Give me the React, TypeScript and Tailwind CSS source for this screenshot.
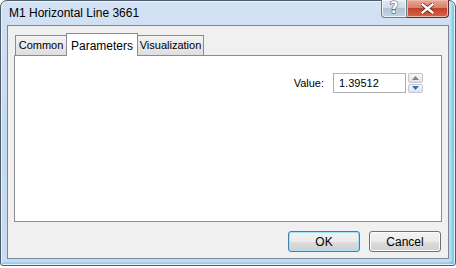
import React from "react";

const font = { fontFamily: '"Liberation Sans", Arial, sans-serif' };

function Tab({ label, selected, w }: { label: string; selected?: boolean; w: string }) {
  if (selected) {
    return (
      <div
        className={`${w} h-[23px] -mb-px relative z-10 bg-white border border-b-0 border-[#898c95] flex items-start justify-center pt-[3px] text-[12px] text-black -mx-px`}
      >
        {label}
      </div>
    );
  }
  return (
    <div
      className={`${w} h-[20px] bg-gradient-to-b from-[#f4f4f4] to-[#dedede] border border-b-0 border-[#898c95] flex items-center justify-center text-[11px] text-black`}
    >
      {label}
    </div>
  );
}

export default function App() {
  return (
    <div className="w-[456px] h-[268px] bg-white relative overflow-hidden" style={font}>
      <div className="w-[456px] h-[266px] rounded-t-[7px] rounded-b-[3px] border border-[#4d5d6e] bg-gradient-to-b from-[#d3e2f3] via-[#c5d9ef] to-[#c9dcf0] shadow-[inset_0_0_0_1px_#e9f1fa,inset_-4px_-3px_3px_-1px_#5ecbe9] flex flex-col px-[6px] pb-[6px]">
        <div className="h-[26px] flex items-center pl-[2px] text-[12px] text-black">M1 Horizontal Line 3661</div>
        <div className="flex-1 border border-[#7a8796] bg-[#f0f0f0] flex flex-col px-[6px] pt-[6px] pb-[6px]">
          <div className="flex items-end pl-[1px] h-[23px]">
            <Tab label="Common" w="w-[52px]" />
            <Tab label="Parameters" selected w="w-[72px]" />
            <Tab label="Visualization" w="w-[67px]" />
          </div>
          <div className="h-[167px] bg-white border border-[#898c95] flex justify-end pt-[17px] pr-[18px]">
            <div className="flex items-start gap-[8px] h-[20px]">
              <span className="text-[11px] text-black leading-[20px] mr-[1px]">Value:</span>
              <div className="w-[73px] h-[20px] border border-[#abadb3] border-t-[#a4b9cc] bg-white text-[11px] text-black leading-[18px] pl-[5px]">
                1.39512
              </div>
              <div className="w-[15px] h-[20px] flex flex-col gap-[1px] -ml-[6px]">
                <div className="flex-1 border border-[#c2c6cc] rounded-[2px] bg-gradient-to-b from-[#f6f7f8] to-[#dfe3e8] flex items-center justify-center">
                  <svg width="7" height="4" viewBox="0 0 7 4">
                    <path d="M0 4 L3.5 0 L7 4 Z" fill="#6e86a4" />
                  </svg>
                </div>
                <div className="flex-1 border border-[#c2c6cc] rounded-[2px] bg-gradient-to-b from-[#f6f7f8] to-[#dfe3e8] flex items-center justify-center">
                  <svg width="7" height="4" viewBox="0 0 7 4">
                    <path d="M0 0 L3.5 4 L7 0 Z" fill="#3d6ea8" />
                  </svg>
                </div>
              </div>
            </div>
          </div>
          <div className="flex-1 flex items-start justify-end gap-[9px] pr-[1px] pt-[9px]">
            <button className="w-[72px] h-[21px] rounded-[3px] border border-[#3c7fb1] shadow-[inset_0_0_0_1px_#a8e2f8] bg-[linear-gradient(to_bottom,#f2f2f2_0%,#ebebeb_50%,#dddddd_50%,#cfcfcf_100%)] text-[12px] text-black">
              OK
            </button>
            <button className="w-[72px] h-[21px] rounded-[3px] border border-[#707070] shadow-[inset_0_0_0_1px_#fcfcfc] bg-[linear-gradient(to_bottom,#f2f2f2_0%,#ebebeb_50%,#dddddd_50%,#cfcfcf_100%)] text-[12px] text-black">
              Cancel
            </button>
          </div>
        </div>
      </div>
      {/* caption buttons */}
      <div className="absolute top-0 left-[381px] flex">
        <div className="w-[26px] h-[18px] rounded-bl-[4px] border border-t-0 border-[#6d7c8d] bg-[linear-gradient(to_bottom,#e2ebf5_0%,#cfdbe8_45%,#b3c3d4_50%,#c4d3e2_100%)] shadow-[inset_0_0_0_1px_#eef3f9] flex items-center justify-center">
          <span
            className="text-[15px] font-bold text-white leading-none"
            style={{ fontFamily: '"DejaVu Sans", sans-serif', WebkitTextStroke: "1px #3b4b5d", paintOrder: "stroke fill" }}
          >
            ?
          </span>
        </div>
        <div className="w-[42px] h-[18px] rounded-br-[4px] border border-t-0 border-l-0 border-[#5b2f2a] bg-[linear-gradient(to_bottom,#e9a99a_0%,#d9806c_45%,#c34227_50%,#d5654a_100%)] shadow-[inset_0_0_0_1px_#f0b8a8] flex items-center justify-center">
          <svg width="13" height="11" viewBox="0 0 13 11">
            <path d="M1.5 1.5 L11.5 9.5 M11.5 1.5 L1.5 9.5" stroke="#5a2a22" strokeWidth="4" strokeLinecap="square" />
            <path d="M1.5 1.5 L11.5 9.5 M11.5 1.5 L1.5 9.5" stroke="#ffffff" strokeWidth="2.4" strokeLinecap="square" />
          </svg>
        </div>
      </div>
    </div>
  );
}
